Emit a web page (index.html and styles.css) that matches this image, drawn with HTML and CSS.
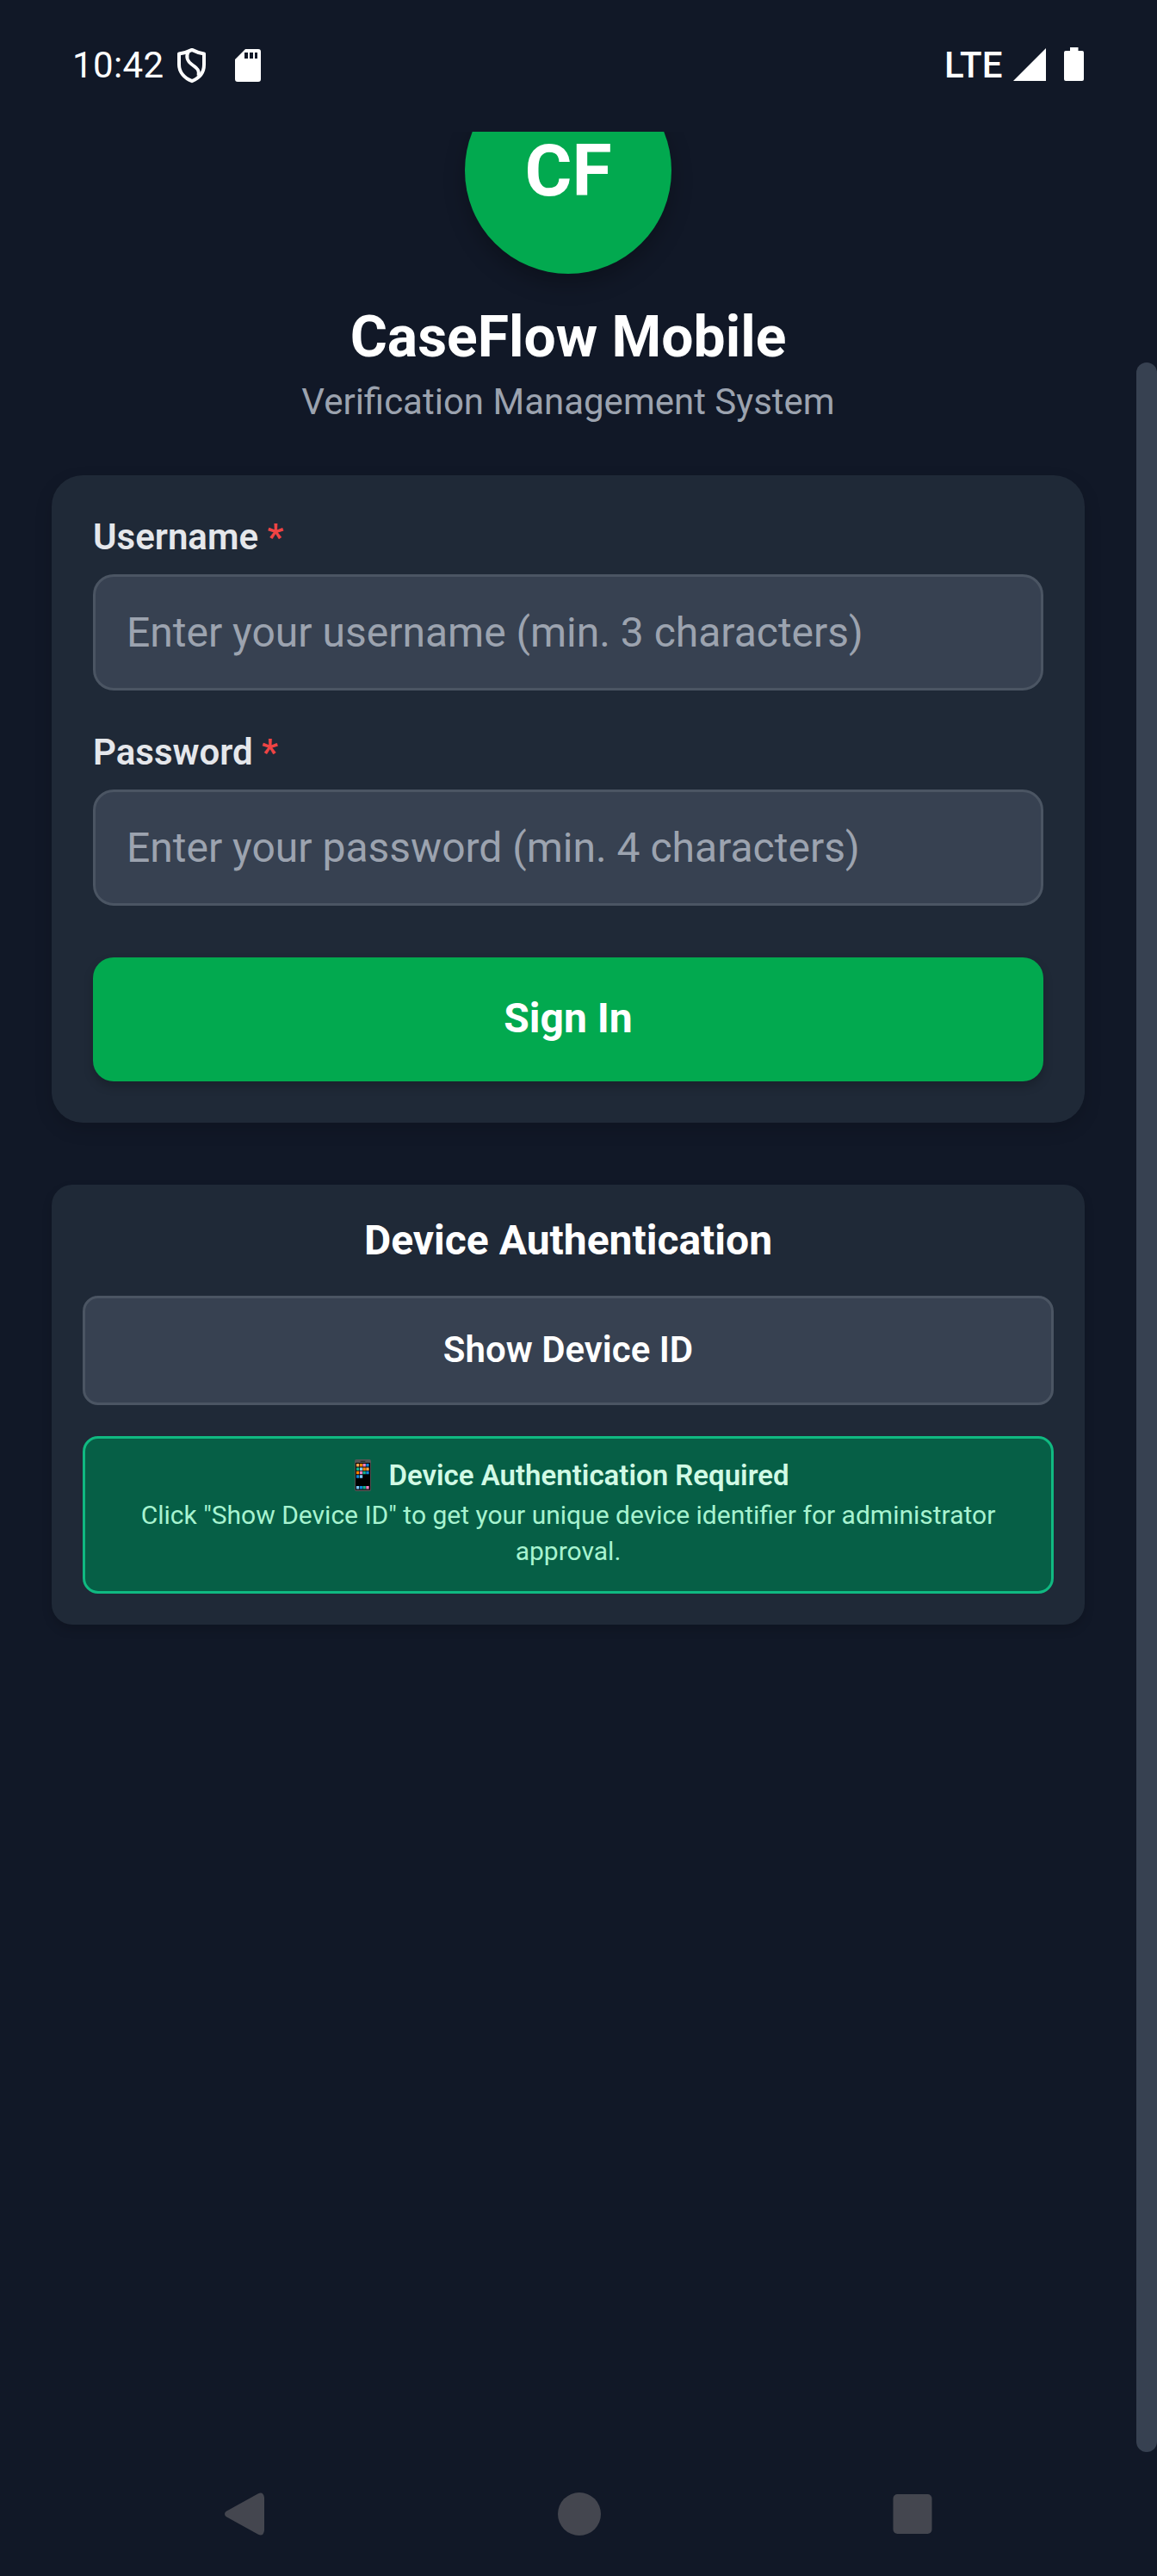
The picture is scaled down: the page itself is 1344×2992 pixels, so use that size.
FILE: index.html
```html
<!DOCTYPE html>
<html lang="en">
<head>
<meta charset="utf-8">
<title>CaseFlow Mobile</title>
<link rel="stylesheet" href="styles.css">
</head>
<body>
<div class="screen">
  <header class="status">
    <div class="status-left">
      <span class="clock">10:42</span>
      <svg class="shield" width="36" height="42" viewBox="0 0 36 42" fill="none" stroke="#fff" stroke-width="4" stroke-linejoin="round"><path d="M18 2.900Q25 6.500 32 7.500V20C32 28.500 27 35.500 18 39.200 9 35.500 3 28.500 3 20V7.500Q11 6.500 18 2.900Z"/><path d="M14 4.500C10.500 11 12.500 16 18 20S27 26 25.500 33" stroke-width="3.800"/></svg>
      <svg class="sd" width="30" height="38" viewBox="0 0 30 38"><path fill="#fff" fill-rule="evenodd" d="M12 0H27Q30 0 30 3V35Q30 38 27 38H3Q0 38 0 35V12ZM11 4V11H15V4ZM17 4V11H21V4ZM23 4V11H26V4Z"/></svg>
    </div>
    <div class="status-right">
      <span class="network">LTE</span>
      <svg class="signal" width="38" height="38" viewBox="0 0 38 38"><path fill="#fff" d="M0 38 38 0V38Z"/></svg>
      <svg class="battery" width="23" height="39" viewBox="0 0 23 39"><path fill="#fff" d="M7 0H16.500V4H21Q23 4 23 6V37Q23 39 21 39H2Q0 39 0 37V6Q0 4 2 4H7Z"/></svg>
    </div>
  </header>

  <main class="viewport">
    <div class="content">
      <div class="brand">
        <div class="logo">CF</div>
        <h1 class="title">CaseFlow Mobile</h1>
        <p class="subtitle">Verification Management System</p>
      </div>

      <form class="card login">
        <label class="label" for="username">Username <span class="required">*</span></label>
        <input class="input" id="username" type="text" placeholder="Enter your username (min. 3 characters)">
        <label class="label" for="password">Password <span class="required">*</span></label>
        <input class="input" id="password" type="password" placeholder="Enter your password (min. 4 characters)">
        <button class="signin" type="button">Sign In</button>
      </form>

      <section class="card device">
        <h2 class="device-title">Device Authentication</h2>
        <button class="show-id" type="button">Show Device ID</button>
        <div class="notice">
          <div class="notice-title">
            <svg class="phone" width="19" height="37" viewBox="0 0 20 37" preserveAspectRatio="none"><rect width="20" height="37" rx="2" fill="#555"/><rect x="1" y="4" width="18" height="31.500" fill="#000"/><path d="M7 2.300h6" stroke="#222" stroke-width="1"/><g fill="#ffa64d"><path d="M2 5h3.500v3.500H2zM14 9.500h3.500V13H14z"/></g><g fill="#ff8500"><path d="M6.200 5h3.500v3.500H6.200zM10 9.500h3.500V13H10zM2 13.800h3.500v3.500H2z"/></g><g fill="#f77fc0"><path d="M10 5h3.500v3.500H10zM6.200 13.800h3.500v3.500H6.200zM14 31h3.500v3.500H14z"/></g><g fill="#0d85d8"><path d="M14 5h3.500v3.500H14zM14 13.800h3.500v3.500H14zM2 18.200h3.500v3.500H2zM6.200 31h3.500v3.500H6.200z"/></g><g fill="#12b08c"><path d="M2 9.500h3.500V13H2zM10 13.800h3.500v3.500H10zM10 31h3.500v3.500H10z"/></g><g fill="#7cc8fa"><path d="M6.200 9.500h3.500V13H6.200zM6.200 18.200h3.500v3.500H6.200zM2 31h3.500v3.500H2z"/></g></svg>
            <span>Device Authentication Required</span>
          </div>
          <p class="notice-text">Click "Show Device ID" to get your unique device identifier for administrator approval.</p>
        </div>
      </section>
    </div>
    <div class="scrollbar"><div class="thumb"></div></div>
  </main>

  <nav class="navbar">
    <svg width="50" height="50" viewBox="0 0 50 50"><path fill="#44464f" d="M2.500 22 40 1.200Q46 -1.500 47 6V44Q46 51.500 40 48.800L2.500 28Q-.5 25 2.500 22Z"/></svg>
    <svg width="50" height="50" viewBox="0 0 50 50"><circle cx="25" cy="25" r="25" fill="#44464f"/></svg>
    <svg width="50" height="50" viewBox="0 0 50 50"><rect x="2.500" y="2" width="45" height="46" rx="5" fill="#44464f"/></svg>
  </nav>
</div>
</body>
</html>
```

FILE: styles.css
```css
* { box-sizing: border-box; margin: 0; }

body {
  background: #111827;
  font-family: Roboto, sans-serif;
  color: #fff;
}

.screen {
  width: 1344px;
  height: 2992px;
  display: flex;
  flex-direction: column;
  overflow: hidden;
}

/* System status bar */
.status {
  height: 153px;
  flex: none;
  display: flex;
  justify-content: space-between;
  padding: 51px 84px 0;
}
.status-left, .status-right {
  display: flex;
  align-items: flex-start;
  height: 50px;
}
.clock, .network {
  font-size: 42px;
  line-height: 50px;
  letter-spacing: .4px;
}
.network { font-weight: 500; }
.shield { margin: 4px 0 0 14px; }
.sd { margin: 6px 0 0 32px; }
.signal { margin: 5px 0 0 12px; }
.battery { margin: 4px 0 0 21px; }
.status-right { margin-right: 1px; }

/* Scrolled page area */
.viewport {
  height: 2695px;
  flex: none;
  display: flex;
  overflow: hidden;
}
.content {
  width: 1320px;
  margin-top: -75px;
  padding: 0 60px;
}

.brand { text-align: center; height: 474px; }
.logo {
  width: 240px;
  height: 240px;
  margin: 0 auto;
  border-radius: 50%;
  background: #02a94f;
  box-shadow: 0 12px 24px rgba(0, 0, 0, .25);
  font-size: 84px;
  font-weight: 700;
  line-height: 242px;
}
.title {
  margin-top: 34px;
  font-size: 66px;
  line-height: 80px;
  font-weight: 700;
}
.subtitle {
  margin-top: 10px;
  font-size: 42px;
  line-height: 50px;
  color: #9ca3af;
}

.card { background: #1f2937; }

.login {
  height: 752px;
  padding: 47px 48px 48px;
  border-radius: 36px;
  box-shadow: 0 8px 20px rgba(0, 0, 0, .15);
}
.label {
  display: block;
  height: 68px;
  font-size: 42px;
  line-height: 50px;
  font-weight: 600;
  color: #e5e7eb;
}
.required { color: #ef4444; }
.input {
  display: block;
  width: 100%;
  height: 135px;
  margin-bottom: 47px;
  padding: 0 36px;
  border: 3px solid #4b5563;
  border-radius: 24px;
  background: #374151;
  color: #fff;
  font: 48px Roboto, sans-serif;
}
.input::placeholder { color: #9ca3af; opacity: 1; }
.signin {
  display: block;
  width: 100%;
  height: 144px;
  margin-top: 60px;
  padding: 0 0 4px;
  border: 0;
  border-radius: 24px;
  background: #02a94f;
  box-shadow: 0 6px 12px rgba(0, 0, 0, .2);
  color: #fff;
  font: 700 48px Roboto, sans-serif;
}

.device {
  height: 511px;
  margin-top: 72px;
  padding: 36px;
  border-radius: 24px;
  box-shadow: 0 6px 12px rgba(0, 0, 0, .15);
  text-align: center;
}
.device-title {
  height: 93px;
  font-size: 48px;
  line-height: 57px;
  font-weight: 700;
}
.show-id {
  display: block;
  width: 100%;
  height: 127px;
  padding: 0 0 2px;
  border: 3px solid #4b5563;
  border-radius: 18px;
  background: #374151;
  color: #fff;
  font: 600 42px Roboto, sans-serif;
}
.notice {
  height: 183px;
  margin-top: 36px;
  padding: 22px 36px;
  border: 3px solid #10b981;
  border-radius: 18px;
  background: #065f46;
}
.notice-title {
  display: flex;
  justify-content: center;
  gap: 20px;
  height: 46px;
  padding-left: 9px;
  font-size: 33px;
  line-height: 42px;
  font-weight: 600;
  color: #d1fae5;
}
.phone { margin-top: 2px; }
.notice-text {
  font-size: 30px;
  line-height: 42px;
  color: #a7f3d0;
}

.scrollbar { width: 24px; padding-top: 268px; }
.thumb {
  height: 2427px;
  border-radius: 12px;
  background: #374151;
}

/* System navigation */
.navbar {
  flex: 1;
  display: flex;
  justify-content: space-between;
  padding: 47px 259px 0 260px;
}
```
